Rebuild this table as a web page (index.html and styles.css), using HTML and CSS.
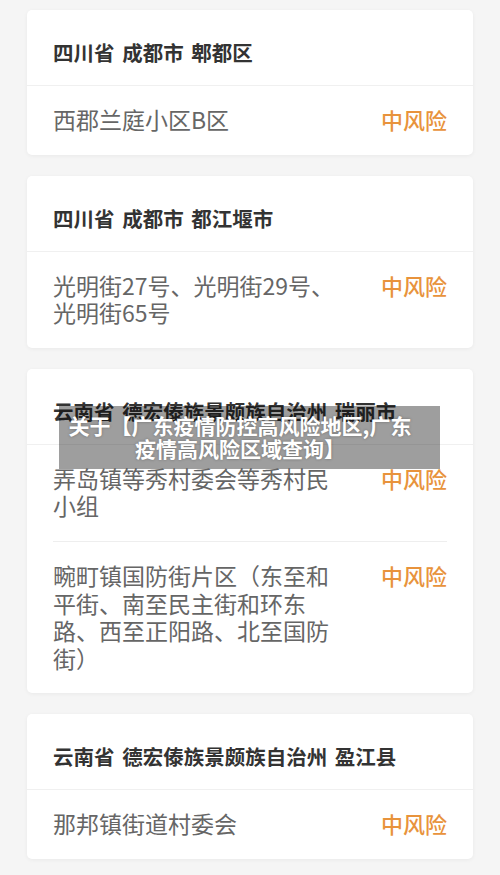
FILE: index.html
```html
<!DOCTYPE html>
<html lang="zh-CN">
<head>
  <meta charset="UTF-8">
  <title>风险地区查询</title>
  <meta name="viewport" content="width=device-width,initial-scale=1">
  <link rel="stylesheet" href="styles.css">
</head>
<body>
  <div class="list">
    <div class="card">
      <div class="area">四川省 成都市 郫都区</div>
      <div class="row"><span class="place">西郡兰庭小区B区</span><span class="risk">中风险</span></div>
    </div>
    <div class="card">
      <div class="area">四川省 成都市 都江堰市</div>
      <div class="row"><span class="place">光明街27号、光明街29号、光明街65号</span><span class="risk">中风险</span></div>
    </div>
    <div class="card">
      <div class="area">云南省 德宏傣族景颇族自治州 瑞丽市</div>
      <div class="row"><span class="place">弄岛镇等秀村委会等秀村民小组</span><span class="risk">中风险</span></div>
      <div class="row"><span class="place">畹町镇国防街片区（东至和平街、南至民主街和环东路、西至正阳路、北至国防街）</span><span class="risk">中风险</span></div>
    </div>
    <div class="card">
      <div class="area">云南省 德宏傣族景颇族自治州 盈江县</div>
      <div class="row"><span class="place">那邦镇街道村委会</span><span class="risk">中风险</span></div>
    </div>
  </div>
  <div class="caption">关于【广东疫情防控高风险地区,广东<br>疫情高风险区域查询】</div>
</body>
</html>
```

FILE: styles.css
```css
body{margin:0;background:#f5f5f5;font-family:"Noto Sans CJK SC","Noto Sans",sans-serif;}
.list{display:flex;flex-direction:column;gap:21px;padding:10px 27px 16px;}
.card{background:#fff;border-radius:5px;box-shadow:0 1px 4px rgba(0,0,0,.05);}
.area{font-size:20.5px;font-weight:bold;color:#333;line-height:28px;word-spacing:3px;padding:28px 26px 19px;border-bottom:1px solid #f0f0f0;}
.row{display:flex;gap:40px;align-items:flex-start;margin:0 26px;padding:20px 0 21px;}
.row+.row{border-top:1px solid #eeeeee;}
.place{flex:1;font-size:23px;line-height:27.6px;color:#666;}
.risk{font-size:22px;line-height:27px;font-weight:500;color:#e8933c;white-space:nowrap;}
.caption{position:absolute;left:59px;top:406px;width:344px;padding:8px 28px 9px 9px;background:rgba(0,0,0,.38);color:#fff;font-size:21px;font-weight:bold;line-height:23px;text-align:center;white-space:nowrap;text-shadow:0 0 3px rgba(0,0,0,.3);}
```
